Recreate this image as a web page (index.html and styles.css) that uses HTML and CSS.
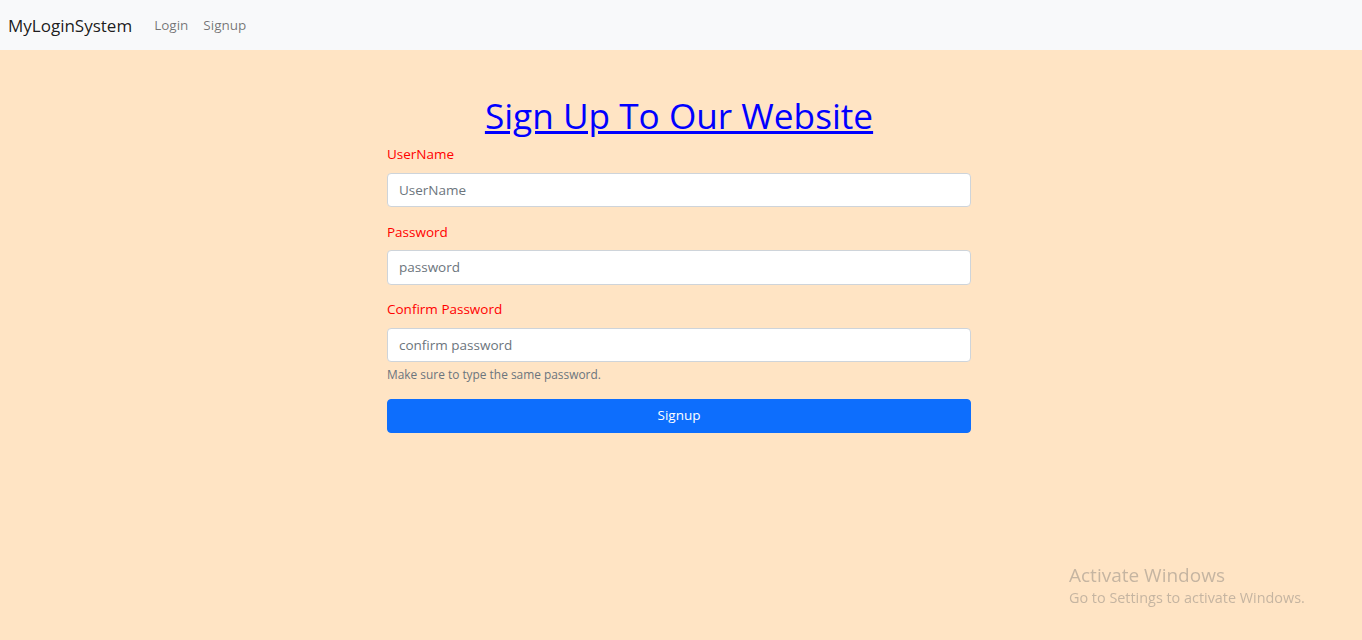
FILE: index.html
```html
<!DOCTYPE html>
<html lang="en">
<head>
<meta charset="utf-8">
<title>SignUp</title>
<link rel="stylesheet" href="styles.css">
</head>
<body>
<nav class="navbar">
  <a class="brand" href="#">MyLoginSystem</a>
  <a class="nav-link" href="#">Login</a>
  <a class="nav-link" href="#">Signup</a>
</nav>
<main class="container">
  <h1 class="title"><a href="#">Sign Up To Our Website</a></h1>
  <form class="form">
    <div class="group">
      <label class="label" for="u">UserName</label>
      <input class="input" id="u" type="text" placeholder="UserName">
    </div>
    <div class="group">
      <label class="label" for="p">Password</label>
      <input class="input" id="p" type="password" placeholder="password">
    </div>
    <div class="group">
      <label class="label" for="c">Confirm Password</label>
      <input class="input" id="c" type="password" placeholder="confirm password">
      <div class="help">Make sure to type the same password.</div>
    </div>
    <button class="btn" type="button">Signup</button>
  </form>
</main>
<div class="watermark">
  <div class="wm-title">Activate Windows</div>
  <div class="wm-sub">Go to Settings to activate Windows.</div>
</div>
</body>
</html>
```
FILE: styles.css
```css
* { box-sizing: border-box; }
html, body { height: 100%; }
body {
  margin: 0;
  background: #ffe4c4;
  font-family: "Open Sans", "Noto Sans", sans-serif;
  font-size: 13.5px;
  line-height: 21.6px;
  color: #212529;
}
.navbar {
  height: 50px;
  background: #f8f9fa;
  display: flex;
  align-items: center;
  padding: 1px 8px 0;
}
.brand {
  font-size: 17px;
  color: rgba(0,0,0,.9);
  text-decoration: none;
  margin-right: 22px;
}
.nav-link {
  font-size: 13.5px;
  color: rgba(0,0,0,.55);
  text-decoration: none;
  margin-right: 15px;
}
.container {
  width: 584px;
  margin-left: calc(50% - 294px);
}
.title {
  margin: 44px 0 7px;
  font-size: 35.2px;
  font-weight: 500;
  line-height: 43.2px;
  text-align: center;
}
.title a { color: #0000ff; text-decoration: underline; }
.group { margin-bottom: 14.4px; }
.label {
  display: block;
  color: #ff0000;
  margin-bottom: 7.2px;
}
.input {
  display: block;
  width: 100%;
  height: 34.2px;
  padding: 5px 11px;
  font: inherit;
  color: #212529;
  background: #fff;
  border: 1px solid #ced4da;
  border-radius: 4px;
}
.input::placeholder { color: #6c757d; }
.help {
  margin-top: 3.6px;
  font-size: 11.9px;
  line-height: 18.9px;
  color: #6c757d;
}
.btn {
  display: block;
  width: 100%;
  height: 34.2px;
  background: #0d6efd;
  border: 1px solid #0d6efd;
  border-radius: 4px;
  color: #fff;
  font: inherit;
  cursor: pointer;
}
.watermark {
  position: fixed;
  left: 1069px;
  top: 562px;
  color: rgba(110,110,110,.4);
  font-family: "Open Sans", sans-serif;
}
.wm-title { font-size: 19px; line-height: 26px; }
.wm-sub { font-size: 14.4px; line-height: 19px; }
```
